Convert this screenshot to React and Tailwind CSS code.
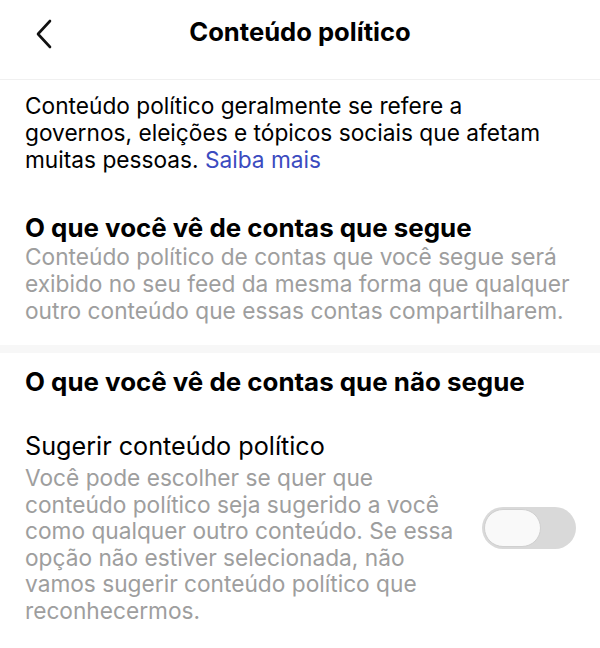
export default function App() {
  return (
    <div className="w-[600px] h-[648px] bg-white overflow-hidden font-['Inter',sans-serif] text-black">
      <header className="h-20 flex items-center justify-center relative border-b border-[#f0f0f0]">
        <button className="absolute left-[30px] top-[18px] w-7 h-8 flex items-center justify-center">
          <svg width="18" height="30" viewBox="0 0 18 30" fill="none">
            <path d="M15 2 L3 15 L15 28" stroke="#111" strokeWidth="2.6" strokeLinecap="round" strokeLinejoin="round" />
          </svg>
        </button>
        <h1 className="text-[25.6px] font-bold -mt-[14px]">Conteúdo político</h1>
      </header>

      <section className="px-[25px] pt-[12px]">
        <p className="text-[22.7px] leading-[27px]">
          Conteúdo político geralmente se refere a<br />
          governos, eleições e tópicos sociais que afetam<br />
          muitas pessoas. <span className="text-[#3b4bc0]">Saiba mais</span>
        </p>

        <h2 className="mt-[40px] text-[25.9px] leading-[30px] font-bold">
          O que você vê de contas que segue
        </h2>
        <p className="text-[22.7px] leading-[27px] text-[#9e9e9e]">
          Conteúdo político de contas que você segue será<br />
          exibido no seu feed da mesma forma que qualquer<br />
          outro conteúdo que essas contas compartilharem.
        </p>
      </section>

      <div className="mt-[21px] h-2 bg-[#f7f7f7]" />

      <section className="px-[25px] pt-[14px]">
        <h2 className="text-[25.9px] leading-[30px] font-bold">
          O que você vê de contas que não segue
        </h2>
        <div className="mt-[34px] flex items-center justify-between">
          <div>
            <div className="text-[25.2px] leading-[30px]">Sugerir conteúdo político</div>
            <p className="mt-[4px] text-[22.7px] leading-[26.6px] text-[#9e9e9e]">
              Você pode escolher se quer que<br />
              conteúdo político seja sugerido a você<br />
              como qualquer outro conteúdo. Se essa<br />
              opção não estiver selecionada, não<br />
              vamos sugerir conteúdo político que<br />
              reconhecermos.
            </p>
          </div>
          <div className="mr-[-1px] w-[94px] h-[42px] rounded-full bg-[#d9d9d9] p-[2px] flex items-center shrink-0">
            <div className="w-[57px] h-[38px] rounded-full bg-[#f9f9f9] border border-[#d0d0d0]" />
          </div>
        </div>
      </section>
    </div>
  );
}
